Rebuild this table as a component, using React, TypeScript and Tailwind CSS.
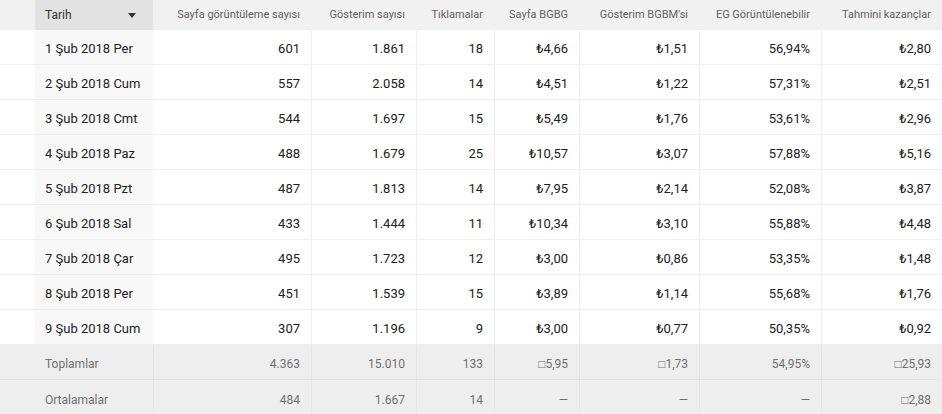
import React from "react";

const cols = "grid grid-cols-[35px_118px_158px_105px_78px_85px_120px_122px_121px]";

const headers = [
  "Sayfa görüntüleme sayısı",
  "Gösterim sayısı",
  "Tıklamalar",
  "Sayfa BGBG",
  "Gösterim BGBM'si",
  "EG Görüntülenebilir",
  "Tahmini kazançlar",
];

const rows: string[][] = [
  ["1 Şub 2018 Per", "601", "1.861", "18", "₺4,66", "₺1,51", "56,94%", "₺2,80"],
  ["2 Şub 2018 Cum", "557", "2.058", "14", "₺4,51", "₺1,22", "57,31%", "₺2,51"],
  ["3 Şub 2018 Cmt", "544", "1.697", "15", "₺5,49", "₺1,76", "53,61%", "₺2,96"],
  ["4 Şub 2018 Paz", "488", "1.679", "25", "₺10,57", "₺3,07", "57,88%", "₺5,16"],
  ["5 Şub 2018 Pzt", "487", "1.813", "14", "₺7,95", "₺2,14", "52,08%", "₺3,87"],
  ["6 Şub 2018 Sal", "433", "1.444", "11", "₺10,34", "₺3,10", "55,88%", "₺4,48"],
  ["7 Şub 2018 Çar", "495", "1.723", "12", "₺3,00", "₺0,86", "53,35%", "₺1,48"],
  ["8 Şub 2018 Per", "451", "1.539", "15", "₺3,89", "₺1,14", "55,68%", "₺1,76"],
  ["9 Şub 2018 Cum", "307", "1.196", "9", "₺3,00", "₺0,77", "50,35%", "₺0,92"],
];

const totals: string[][] = [
  ["Toplamlar", "4.363", "15.010", "133", "□5,95", "□1,73", "54,95%", "□25,93"],
  ["Ortalamalar", "484", "1.667", "14", "—", "—", "—", "□2,88"],
];

export default function App() {
  return (
    <div
      className="w-[942px] h-[414px] bg-white overflow-hidden"
      style={{ fontFamily: "Roboto, 'Liberation Sans', sans-serif" }}
    >
      {/* header */}
      <div className={`${cols} h-[30px] bg-[#f1f1f1] text-[11px] text-[#616161]`}>
        <div />
        <div className="bg-[#e2e2e2] flex items-center justify-between pl-[10px] pr-[17px] text-[12px] text-[#333]">
          <span>Tarih</span>
          <svg width="8" height="5" viewBox="0 0 8 5">
            <path d="M0 0 L8 0 L4 5 Z" fill="#333" />
          </svg>
        </div>
        {headers.map((h) => (
          <div key={h} className="flex items-center justify-end pr-[11px] whitespace-nowrap">
            {h}
          </div>
        ))}
      </div>

      {/* body rows */}
      {rows.map((r) => (
        <div
          key={r[0]}
          className={`${cols} h-[35px] border-b border-[#eeeeee] text-[13px] text-[#212121]`}
        >
          <div />
          <div className="bg-[#f8f8f8] flex items-center pt-[4px] pl-[10px] whitespace-nowrap">
            {r[0]}
          </div>
          {r.slice(1).map((v, i) => (
            <div
              key={i}
              className={`flex items-center justify-end pt-[4px] pr-[11px] whitespace-nowrap ${
                i > 0 ? "border-l border-[#eeeeee]" : ""
              }`}
            >
              {v}
            </div>
          ))}
        </div>
      ))}

      {/* totals */}
      {totals.map((r, ri) => (
        <div
          key={r[0]}
          className={`${cols} h-[35px] bg-[#eeeeee] text-[12px] text-[#707070] ${
            ri === 0 ? "border-b border-[#e2e2e2]" : ""
          }`}
        >
          <div />
          <div className="flex items-center pt-[4px] pl-[10px] whitespace-nowrap">{r[0]}</div>
          {r.slice(1).map((v, i) => (
            <div
              key={i}
              className="flex items-center justify-end pt-[4px] pr-[11px] whitespace-nowrap border-l border-[#e4e4e4]"
            >
              {v}
            </div>
          ))}
        </div>
      ))}
    </div>
  );
}
